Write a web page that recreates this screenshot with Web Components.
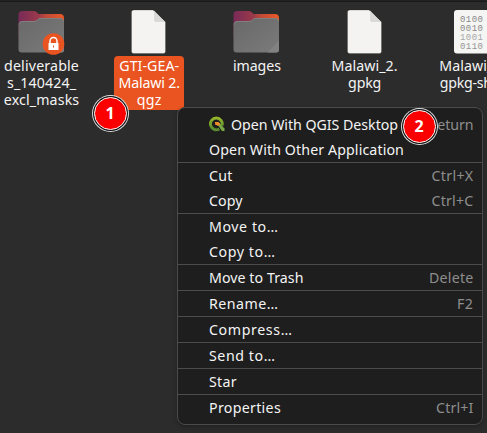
<!DOCTYPE html>
<html lang="en"><head><meta charset="utf-8"><title>Files</title>
<style>
html,body{margin:0;height:100%;overflow:hidden;background:#2c2c2c}
body{font-family:"Noto Sans","Open Sans",sans-serif;font-size:14.2px;color:#f4f4f4}
</style></head><body>
<file-window></file-window>
<script>
class FitText extends HTMLElement{
  connectedCallback(){
    const r=this.attachShadow({mode:'open'});
    r.innerHTML='<style>:host{display:block;white-space:pre;line-height:inherit;width:max-content}span{display:inline-block}</style><span></span>';
    const s=r.querySelector('span');s.textContent=this.getAttribute('text');
    const w=+this.getAttribute('w');
    if(w){const n=s.getBoundingClientRect().width;s.style.letterSpacing=(w-n)/s.textContent.length+'px';}
  }
}
customElements.define('fit-text',FitText);

class FileIcon extends HTMLElement{
  connectedCallback(){
    const k=this.getAttribute('kind');
    const folder=`<defs><linearGradient id="b"><stop stop-color="#782a58"/><stop offset=".45" stop-color="#9c3a4a"/><stop offset=".6" stop-color="#c04a38"/><stop offset="1" stop-color="#ec5a28"/></linearGradient><linearGradient id="f" x2="1" y2="1"><stop stop-color="#686868"/><stop offset="1" stop-color="#7b7b7b"/></linearGradient></defs>
      <path d="M5 11h12q2 0 3 1.500l1.500 1.500H43q4 0 4 4v20H1.500V14.500q0-3.500 3.500-3.500z" fill="url(#b)"/>
      <path d="M1.500 25q0-4 4-4h11.500q2 0 3-1l1-1q1-1 3-1h19q4 0 4 4v27.500q0 3-3 3H4.500q-3 0-3-3z" fill="url(#f)"/><path d="M2 24.500q.5-3 4-3h11q2 0 3-1l1-1q1-1 3-1h19q3 0 3.500 3" stroke="#858585" stroke-width=".8" fill="none"/>
      <path d="M47 40.500v9.500q0 2.500-3 2.500H35.500z" fill="#828282"/>`;
    const page=`<path d="M8.500 10H29L41.500 22v29.500q0 2-2 2H9.500q-2 0-2-2V12q0-2 2-2z" fill="#f4f3f2" stroke="#242424" stroke-opacity=".35" stroke-width=".7"/><path d="M30 10.500l11 11.500h-9q-2 0-2-2z" fill="#d9d9d8"/>`;
    const bin=`<rect x="7" y="10" width="35" height="43.500" rx="3" fill="#f5f5f4"/><g font-family="Liberation Mono,monospace" font-size="9" fill="#898989"><text x="13" y="22" textLength="23">0100</text><text x="13" y="31" textLength="23">0010</text><text x="13" y="40" textLength="23" fill="#a8a8a8">1001</text><text x="13" y="49" textLength="23" fill="#959595">0110</text></g>`;
    const lock=`<circle cx="36.500" cy="44" r="10.800" fill="#e95420"/><path d="M33 43v-2a3.500 3.500 0 0 1 7 0v2" stroke="#fff" stroke-width="1.500" fill="none"/><path d="M31.500 43h10v7h-10zM36 45.500v2h1v-2z" fill="#fff" fill-rule="evenodd"/>`;
    this.attachShadow({mode:'open'}).innerHTML=`<style>:host{display:block;height:56px;width:50px}svg{display:block}</style><svg width="50" height="56" viewBox="0 0 50 56">${k=='page'?page:k=='binary'?bin:folder+(k=='locked'?lock:'')}</svg>`;
  }
}
customElements.define('file-icon',FileIcon);

class FileItem extends HTMLElement{
  connectedCallback(){
    const l=this.getAttribute('label').split('|').map(x=>x.split(':'));
    this.attachShadow({mode:'open'}).innerHTML=`<style>
    :host{display:flex;flex-direction:column;align-items:center;width:107.700px;flex:none}
    .l{display:flex;flex-direction:column;align-items:center;line-height:17px;padding:1px 4px 2px;border-radius:4px;box-sizing:border-box;min-width:70px}
    :host([selected]) .l{background:#e95420;color:#fff}
    </style><file-icon kind="${this.getAttribute('kind')}"></file-icon><div class="l">${l.map(([t,w])=>`<fit-text text="${t}" w="${w}"></fit-text>`).join('')}</div>`;
  }
}
customElements.define('file-item',FileItem);

class MenuItem extends HTMLElement{
  connectedCallback(){
    const g=a=>this.getAttribute(a)||'';
    this.attachShadow({mode:'open'}).innerHTML=`<style>
    :host{display:flex;align-items:center;height:25px;line-height:25px;padding:0 8.500px 0 31px}
    :host([sep]){border-bottom:1px solid #4b4b4b}
    .k{margin-left:auto;color:#8e8e8e}</style><slot></slot><fit-text text="${g('text')}" w="${g('w')}"></fit-text>${g('key')?`<fit-text class="k" text="${g('key')}" w="${g('kw')}"></fit-text>`:''}`;
  }
}
customElements.define('menu-item',MenuItem);

class QgisLogo extends HTMLElement{
  connectedCallback(){
    this.attachShadow({mode:'open'}).innerHTML=`<style>:host{display:block;width:16px;height:16px;margin-right:6px;margin-top:-2px}svg{display:block}</style>
    <svg width="16" height="16" viewBox="0 0 16 16"><defs><linearGradient id="g" x2="0" y2="1"><stop stop-color="#94b52d"/><stop offset="1" stop-color="#568b2f"/></linearGradient></defs>
    <path d="M10.300 13A5.900 5.900 0 1 1 13 9.500" fill="none" stroke="url(#g)" stroke-width="2.900"/><path d="M8.500 8.500l2-1.500 5 5.500v2.500h-2.500z" fill="#79aa45"/><path d="M6 6h3.500l1.800 2-2 2L6 8.500z" fill="#ee8b2d"/></svg>`;
  }
}
customElements.define('qgis-logo',QgisLogo);

class ContextMenu extends HTMLElement{
  connectedCallback(){
    this.attachShadow({mode:'open'}).innerHTML=`<style>:host{display:block;box-sizing:border-box;width:306px;height:318px;padding:4px 0;background:#1e1e1e;border:1px solid #4b4b4b;border-radius:8px;box-shadow:0 2px 4px #0004}</style>
    <menu-item text="Open With QGIS Desktop" w="167" key="Return" kw="45"><qgis-logo></qgis-logo></menu-item>
    <menu-item sep text="Open With Other Application" w="195"></menu-item>
    <menu-item text="Cut" w="23.500" key="Ctrl+X" kw="42"></menu-item>
    <menu-item sep text="Copy" w="33.500" key="Ctrl+C" kw="42"></menu-item>
    <menu-item text="Move to…" w="69.500"></menu-item>
    <menu-item sep text="Copy to…" w="66.500"></menu-item>
    <menu-item sep text="Move to Trash" w="94.500" key="Delete" kw="44.500"></menu-item>
    <menu-item sep text="Rename…" w="69.500" key="F2" kw="16.500"></menu-item>
    <menu-item sep text="Compress…" w="83.500"></menu-item>
    <menu-item sep text="Send to…" w="66.500"></menu-item>
    <menu-item sep text="Star" w="28"></menu-item>
    <menu-item text="Properties" w="72" key="Ctrl+I" kw="37.500"></menu-item>`;
  }
}
customElements.define('context-menu',ContextMenu);

class StepBadge extends HTMLElement{
  connectedCallback(){
    this.attachShadow({mode:'open'}).innerHTML=`<style>:host{display:grid;place-items:center;box-sizing:border-box;width:33px;height:33px;border-radius:50%;background:#fa0000;color:#fff;border:1px solid #fff;font:bold 16px/1 "Open Sans","Noto Sans",sans-serif;box-shadow:0 0 0 1px #111,0 0 0 2px #ddd}</style><slot></slot>`;
  }
}
customElements.define('step-badge',StepBadge);

class FileWindow extends HTMLElement{
  connectedCallback(){
    this.attachShadow({mode:'open'}).innerHTML=`<style>
    :host{display:block;position:relative;width:487px;height:433px;overflow:hidden;background:#2c2c2c;box-sizing:border-box;border-top:1px solid #222;box-shadow:inset 0 1px #191919}
    .files{display:flex;align-items:flex-start;margin:-1px 0 0 -12.300px}
    context-menu{position:absolute;left:177px;top:106px}
    step-badge{position:absolute}
    .a{left:93.500px;top:95.500px}.b{left:402.500px;top:108.500px}
    </style>
    <div class="files">
    <file-item kind="locked" label="deliverable:75|s_140424_:69|excl_masks:75.5"></file-item>
    <file-item selected kind="page" label="GTI-GEA-:60|Malawi 2.:61.5|qgz:25"></file-item>
    <file-item kind="folder" label="images:48"></file-item>
    <file-item kind="page" label="Malawi_2.:66|gpkg:33"></file-item>
    <file-item kind="binary" label="Malawi_2.:66|gpkg-shm:65"></file-item>
    </div>
    <context-menu></context-menu>
    <step-badge class="a">1</step-badge><step-badge class="b">2</step-badge>`;
  }
}
customElements.define('file-window',FileWindow);
</script></body></html>
